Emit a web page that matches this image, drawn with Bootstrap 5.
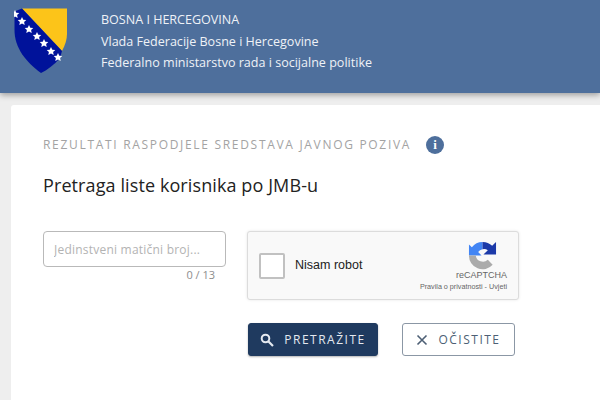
<!DOCTYPE html>
<html lang="bs">
<head>
<meta charset="utf-8">
<title>Pretraga liste korisnika</title>
<link href="https://cdn.jsdelivr.net/npm/bootstrap@5.3.0/dist/css/bootstrap.min.css" rel="stylesheet">
<style>
html,body{height:400px;overflow:hidden}
body{background:#eeeeee;font-family:"Open Sans",sans-serif}
.top-head{height:93px;background:#4e6f9c;box-shadow:0 2px 6px rgba(0,0,0,.35);padding:8px 0 0 14px;gap:33px;color:#eef2f7;font-size:12.55px;line-height:21.5px;position:relative}
.crest{width:54px;height:66px;flex:none}
.head-lines{padding-top:1px}
.sheet{margin:12px 0 0 11px;background:#fff;height:300px;padding:31px 0 0 32px;border-radius:3px 0 0 0}
.kicker{font-size:12px;letter-spacing:1.69px;color:#a3a3a3;line-height:18px;gap:15px}
.info-dot{width:18px;height:18px;border-radius:50%;background:#4e6f9c;color:#fff;font:700 13px/18px "Liberation Serif",serif;text-align:center;letter-spacing:0}
.page-title{font-size:18px;font-weight:400;color:#222;line-height:26px;margin:18px 0 0;letter-spacing:.1px}
.form-area{margin-top:33px;gap:21px}
.jmb-col{width:183px}
.jmb-input.form-control{height:36px;border:1px solid #b9b9b9;border-radius:4px;font-size:12px;padding:0 10px;font-family:inherit;box-shadow:none}
.jmb-input::placeholder{color:#b3b3b3;letter-spacing:.22px}
.counter{font-size:11px;color:#8d8d8d;text-align:right;padding-right:11px;line-height:16px}
.captcha{width:272px;height:69px;background:#f9f9f9;border:1px solid #dcdcdc;border-radius:3px;box-shadow:0 0 3px rgba(0,0,0,.1);font-family:"Liberation Sans",sans-serif;padding:0 11px}
.tick-box{width:26px;height:26px;background:#fff;border:2px solid #c1c1c1;border-radius:2px;margin-right:10px}
.tick-label{font-size:12.5px;color:#222}
.cap-logo{line-height:1;color:#666}
.cap-logo svg{margin-right:10px}
.cap-name{font-size:9px;margin-top:1px}
.cap-terms{font-size:7.2px;margin-top:3px}
.act-row{gap:24px;margin-top:23px;padding-left:1px}
.btn-go.btn,.btn-clear.btn{height:33px;border-radius:3px;font-size:12px;letter-spacing:1.5px;padding:0;display:flex;align-items:center;justify-content:center;gap:10px;font-family:inherit}
.btn-go.btn{width:130px;background:#1f3a5f;border:1px solid #1f3a5f;color:#e4e9f0;box-shadow:0 1px 2px rgba(0,0,0,.3)}
.btn-clear.btn{width:113px;background:#fff;border:1px solid #8b97a5;color:#4d5f75}
</style>
</head>
<body>
<header class="top-head d-flex">
<svg class="crest" viewBox="0 0 54 66" aria-hidden="true">
<path d="M8 .5H53V26C53 32 51 37 48 43Z" fill="#fcc419"/>
<path d="M.5 3.500L8 .5L48 43L46 50C40 57 33 62 27 65C12 54 .5 40 .5 22Z" fill="#00129a"/>
<g fill="#fff">
<path d="M8 13l1.300 2.700 3 .4-2.200 2 .6 3-2.700-1.500-2.700 1.500.6-3-2.200-2 3-.4z" transform="translate(-7 -11)"/>
<path d="M8 13l1.300 2.700 3 .4-2.200 2 .6 3-2.700-1.500-2.700 1.500.6-3-2.200-2 3-.4z" transform="translate(0 -4)"/>
<path d="M8 13l1.300 2.700 3 .4-2.200 2 .6 3-2.700-1.500-2.700 1.500.6-3-2.200-2 3-.4z" transform="translate(7 4)"/>
<path d="M8 13l1.300 2.700 3 .4-2.200 2 .6 3-2.700-1.500-2.700 1.500.6-3-2.200-2 3-.4z" transform="translate(15 11)"/>
<path d="M8 13l1.300 2.700 3 .4-2.200 2 .6 3-2.700-1.500-2.700 1.500.6-3-2.200-2 3-.4z" transform="translate(22 18)"/>
<path d="M8 13l1.300 2.700 3 .4-2.200 2 .6 3-2.700-1.500-2.700 1.500.6-3-2.200-2 3-.4z" transform="translate(29 26)"/>
<path d="M8 13l1.300 2.700 3 .4-2.200 2 .6 3-2.700-1.500-2.700 1.500.6-3-2.200-2 3-.4z" transform="translate(36 32)"/>
</g>
</svg>
<div class="head-lines">
<div>BOSNA I HERCEGOVINA</div>
<div>Vlada Federacije Bosne i Hercegovine</div>
<div>Federalno ministarstvo rada i socijalne politike</div>
</div>
</header>
<main class="sheet">
<div class="kicker d-flex align-items-center"><span>REZULTATI RASPODJELE SREDSTAVA JAVNOG POZIVA</span><span class="info-dot">i</span></div>
<h1 class="page-title">Pretraga liste korisnika po JMB-u</h1>
<div class="form-area d-flex">
<div class="jmb-col">
<input class="form-control jmb-input" type="text" placeholder="Jedinstveni matični broj...">
<div class="counter">0 / 13</div>
</div>
<div>
<div class="captcha d-flex align-items-center justify-content-between">
<div class="d-flex align-items-center"><span class="tick-box"></span><span class="tick-label">Nisam robot</span></div>
<div class="cap-logo text-end d-flex flex-column align-items-end">
<svg width="29" height="29" viewBox="0 0 30 30" aria-hidden="true">
<path d="M15 1a14 14 0 0 0-11 5.500L1 3.500V15h13l-3.500-3.500A6.500 6.500 0 0 1 15 8.500z" fill="#4285f4"/>
<path d="M15 1a14 14 0 0 1 10 4l4-4v13H16l4.500-4.500A7 7 0 0 0 15 8.500z" fill="#1c3aa9"/>
<path d="M1 15a14 14 0 0 0 24.500 9.500l-5-5A7.500 7.500 0 0 1 8 15z" fill="#ababab"/>
</svg>
<div class="cap-name">reCAPTCHA</div>
<div class="cap-terms">Pravila o privatnosti - Uvjeti</div>
</div>
</div>
<div class="act-row d-flex">
<button type="button" class="btn btn-go">
<svg width="14" height="14" viewBox="0 0 14 14" aria-hidden="true"><circle cx="5.500" cy="5.500" r="3.800" fill="none" stroke="#e4e9f0" stroke-width="2"/><path d="M8.500 8.500L13 13" stroke="#e4e9f0" stroke-width="2.200"/></svg>PRETRAŽITE</button>
<button type="button" class="btn btn-clear">
<svg width="12" height="12" viewBox="0 0 12 12" aria-hidden="true"><path d="M1.500 1.500l9 9M10.500 1.500l-9 9" stroke="#4d5f75" stroke-width="1.600"/></svg>OČISTITE</button>
</div>
</div>
</div>
</main>
<script src="https://cdn.jsdelivr.net/npm/bootstrap@5.3.0/dist/js/bootstrap.bundle.min.js"></script>
</body>
</html>
